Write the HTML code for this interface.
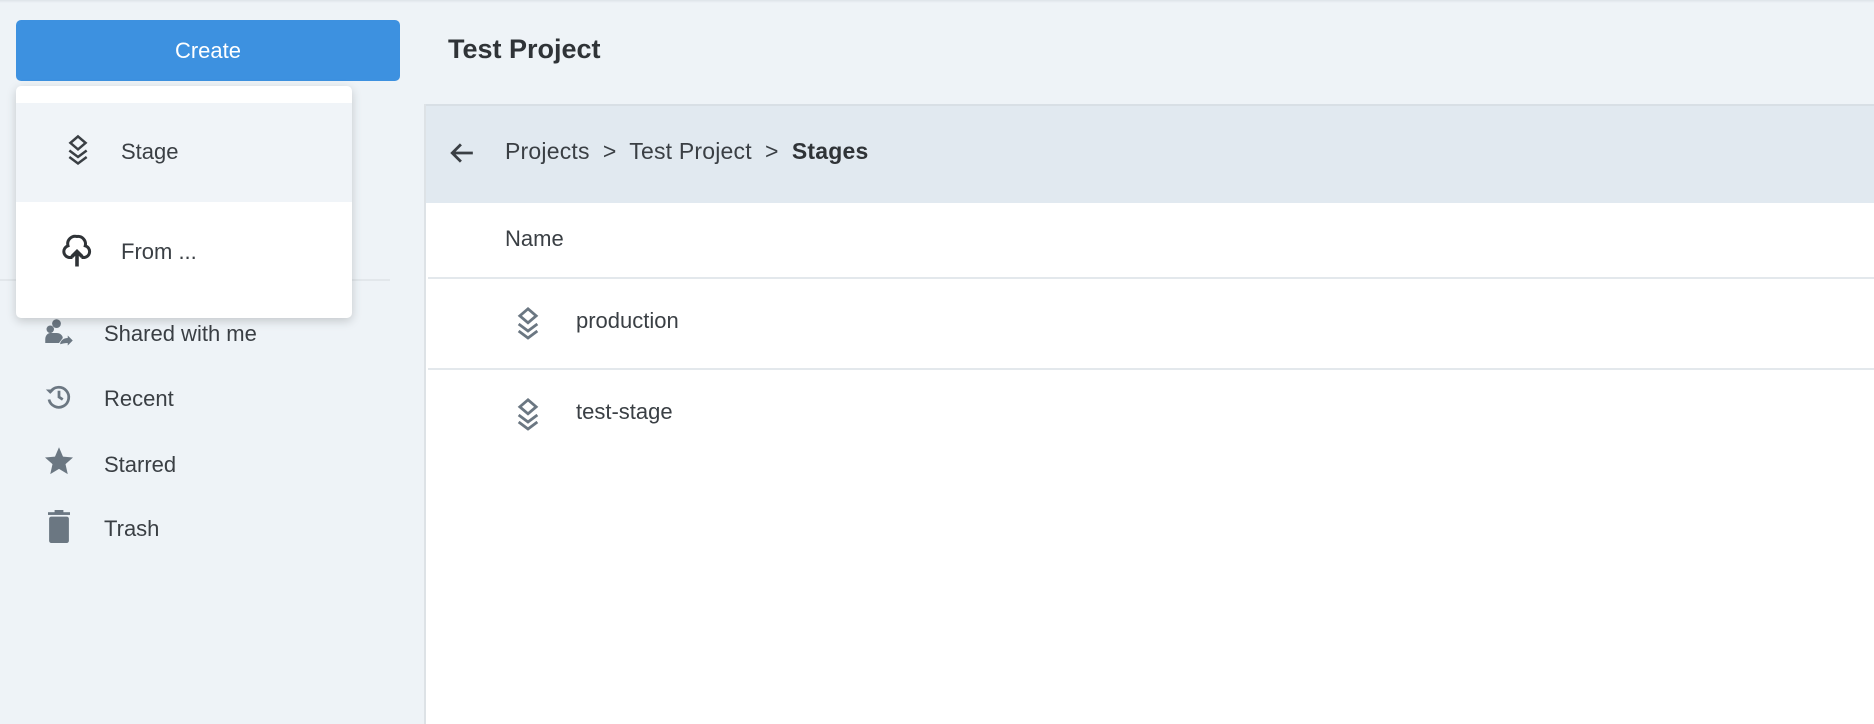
<!DOCTYPE html><html><head><style>
*{margin:0;padding:0;box-sizing:border-box}
body{width:1874px;height:724px;background:#eef3f7;font-family:"Liberation Sans",sans-serif;color:#333;position:relative;overflow:hidden}
.a{position:absolute}
.t{font-size:22px;color:#3a3f44;position:absolute;line-height:1}
</style></head><body>
<div class="a" style="left:0;top:0;width:1874px;height:3px;background:linear-gradient(#dde3e8,#eef3f7)"></div>
<div class="a" style="left:16px;top:20px;width:384px;height:61px;background:#3d91e0;border-radius:5px;color:#fff;font-size:22px;text-align:center;line-height:61px">Create</div>
<div class="t" style="left:448px;top:36px;font-size:27px;font-weight:bold;color:#2f3337">Test Project</div>
<div class="a" style="left:0;top:279px;width:390px;height:2px;background:#e2e7eb"></div>
<svg class="a" style="left:44px;top:318px" width="30" height="30" viewBox="0 0 24 24" fill="#6b7782"><circle cx="10" cy="4.5" r="3.5"/><circle cx="5" cy="9" r="3"/><path d="M1 17c0-3 2-5 4-5h5c3 0 5 2 5 4l-3 4H1z"/><path d="M13 20c1-2.5 3-4 6-4v-2l4 4-4 4v-2c-2.5 0-4 .5-6 1z"/></svg>
<div class="t" style="left:104px;top:323px">Shared with me</div>
<svg class="a" style="left:44px;top:382px" width="30" height="30" viewBox="0 0 24 24" fill="none" stroke="#6b7782" stroke-width="2.2"><path d="M5 8a8 8 0 1 1-1 6"/><path d="M12 7v5l3 2"/><path d="M1.5 6l3.5 3.5 3.5-3.5" fill="#6b7782" stroke="none"/></svg>
<div class="t" style="left:104px;top:388px">Recent</div>
<svg class="a" style="left:44px;top:446px" width="30" height="30" viewBox="0 0 24 24" fill="#6b7782"><path d="M12 1l3.2 7.5 8 .7-6 5.3 1.8 8L12 18.3 5 22.5l1.8-8-6-5.3 8-.7z"/></svg>
<div class="t" style="left:104px;top:454px">Starred</div>
<svg class="a" style="left:48px;top:510px" width="22" height="33" viewBox="0 0 20 30" fill="#6b7782"><rect x="1" y="6" width="18" height="24" rx="2"/><rect x="0" y="2" width="20" height="2.5"/><rect x="6" y="0" width="8" height="2.5"/></svg>
<div class="t" style="left:104px;top:518px">Trash</div>
<div class="a" style="left:424px;top:104px;width:1450px;height:620px;background:#fff;border-left:2px solid #dde2e6"></div>
<div class="a" style="left:426px;top:104px;width:1448px;height:99px;background:#e1e9f0;border-top:2px solid #d8dfe5"></div>
<svg class="a" style="left:449px;top:140px" width="26" height="26" viewBox="0 0 24 24" fill="none" stroke="#3a3f44" stroke-width="2.6"><path d="M22 12H3M11 4l-8 8 8 8"/></svg>
<div class="t" style="left:505px;top:140px;font-size:23px;letter-spacing:.2px">Projects &nbsp;&gt;&nbsp; Test Project &nbsp;&gt;&nbsp; <b style="color:#2f3337">Stages</b></div>
<div class="t" style="left:505px;top:228px">Name</div>
<div class="a" style="left:428px;top:277px;width:1446px;height:2px;background:#e3e8ec"></div>
<div class="a" style="left:428px;top:368px;width:1446px;height:2px;background:#e3e8ec"></div>
<svg class="a" style="left:514px;top:306px" width="28" height="36" viewBox="0 0 24 30" fill="none" stroke="#6b7782" stroke-width="2.4"><path d="M12 2l7 6-7 6-7-6z"/><path d="M4 15l8 6 8-6M4 21l8 6 8-6"/></svg>
<div class="t" style="left:576px;top:310px">production</div>
<svg class="a" style="left:514px;top:397px" width="28" height="36" viewBox="0 0 24 30" fill="none" stroke="#6b7782" stroke-width="2.4"><path d="M12 2l7 6-7 6-7-6z"/><path d="M4 15l8 6 8-6M4 21l8 6 8-6"/></svg>
<div class="t" style="left:576px;top:401px">test-stage</div>
<div class="a" style="left:16px;top:86px;width:336px;height:232px;background:#fff;border-radius:5px;box-shadow:0 3px 10px rgba(0,0,0,.18);overflow:hidden">
<div class="a" style="left:0;top:17px;width:336px;height:99px;background:#f0f4f8"></div>
<svg class="a" style="left:49px;top:47px" width="26" height="35" viewBox="0 0 24 30" fill="none" stroke="#3a3f44" stroke-width="2.3"><path d="M12 2l7 6-7 6-7-6z"/><path d="M4 15l8 6 8-6M4 21l8 6 8-6"/></svg>
<div class="t" style="left:105px;top:55px">Stage</div>
<svg class="a" style="left:43px;top:146px" width="36" height="36" viewBox="0 0 24 24" fill="none" stroke="#2f3337" stroke-width="2"><path d="M9 17H7a4 4 0 0 1-1-7.8A5 5 0 0 1 12 3a5 5 0 0 1 5.5 6.2A4 4 0 0 1 17 17h-2"/><path d="M12 23V13M8.5 16.5L12 13l3.5 3.5" stroke-width="2.4"/></svg>
<div class="t" style="left:105px;top:155px">From ...</div>
</div>
</body></html>
